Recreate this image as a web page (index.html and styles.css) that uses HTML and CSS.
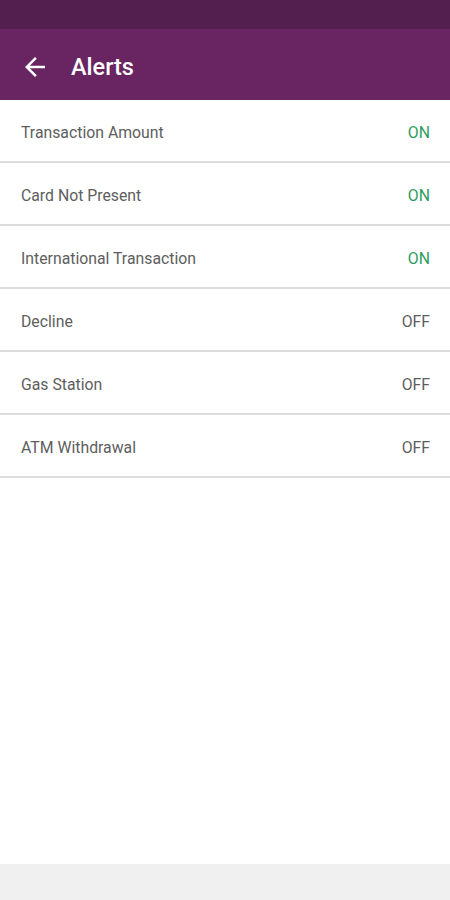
FILE: index.html
```html
<!DOCTYPE html>
<html lang="en">
<head>
  <meta charset="UTF-8">
  <meta name="viewport" content="width=device-width, initial-scale=1.0">
  <title>Alerts</title>
  <link rel="stylesheet" href="styles.css">
</head>
<body>
  <div class="screen">
    <div class="status-bar"></div>
    <header class="app-bar">
      <svg class="back" width="24" height="24" viewBox="0 0 24 24">
        <path d="M20 11H7.83l5.59-5.59L12 4l-8 8 8 8 1.41-1.41L7.83 13H20v-2z" fill="#fff"/>
      </svg>
      <h1>Alerts</h1>
    </header>
    <ul class="alert-list">
      <li class="alert-row"><span>Transaction Amount</span><span class="state on">ON</span></li>
      <li class="alert-row"><span>Card Not Present</span><span class="state on">ON</span></li>
      <li class="alert-row"><span>International Transaction</span><span class="state on">ON</span></li>
      <li class="alert-row"><span>Decline</span><span class="state">OFF</span></li>
      <li class="alert-row"><span>Gas Station</span><span class="state">OFF</span></li>
      <li class="alert-row"><span>ATM Withdrawal</span><span class="state">OFF</span></li>
    </ul>
    <div class="bottom-bar"></div>
  </div>
</body>
</html>
```

FILE: styles.css
```css
/* Corpo da página */
body {
  margin: 0;
  font-family: Roboto, "Liberation Sans", Arial, sans-serif;
  background-color: #fff;
}

.screen {
  height: 900px;
  display: flex;
  flex-direction: column;
}

/* Barra de status */
.status-bar {
  height: 29px;
  background-color: #531f4f;
}

/* Barra do app */
.app-bar {
  height: 71px;
  background-color: #682561;
  display: flex;
  align-items: center;
  padding: 4px 0 0 20px;
  box-sizing: border-box;
}

.back {
  width: 30px;
  height: 30px;
}

.app-bar h1 {
  margin: 0 0 0 21px;
  color: #fff;
  font-size: 23.5px;
  font-weight: 500;
}

/* Lista de alertas */
.alert-list {
  list-style: none;
  margin: 0;
  padding: 0;
  flex: 1;
}

.alert-row {
  height: 63px;
  border-bottom: 2px solid #dcdcdc;
  display: flex;
  align-items: center;
  justify-content: space-between;
  padding: 3px 20px 0 21px;
  box-sizing: border-box;
  font-size: 15.8px;
  color: #5e5e5e;
}

.state.on {
  color: #2e9c5e;
}

/* Barra inferior */
.bottom-bar {
  height: 36px;
  background-color: #f0f0f0;
}
```
